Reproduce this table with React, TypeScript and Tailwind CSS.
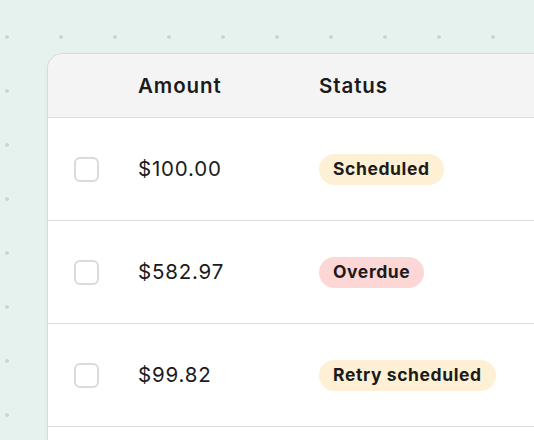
const rows = [
  { amount: '$100.00', status: 'Scheduled', tone: 'bg-[#fdf0d4]' },
  { amount: '$582.97', status: 'Overdue', tone: 'bg-[#fdd6d6]' },
  { amount: '$99.82', status: 'Retry scheduled', tone: 'bg-[#fdf0d4]' },
  { amount: '', status: '', tone: '' },
]

export default function App() {
  return (
    <div
      className="h-[440px] w-[534px] overflow-hidden bg-[#e5f2ee] bg-[radial-gradient(circle,#cbd7d3_1.8px,transparent_2.1px)] bg-[size:54px_54px] bg-[position:-20px_10px] pl-[47px] pt-[53px] text-[#1b1b1b]"
      style={{ fontFamily: 'Inter, "Noto Sans", sans-serif' }}
    >
      <div className="w-[520px] overflow-hidden rounded-tl-[16px] border-l border-t border-[#dadada] bg-white shadow-[0_1px_4px_rgba(0,0,0,0.04)]">
        <div className="grid h-[64px] grid-cols-[90px_181px_1fr] items-center border-b border-[#dcdcdc] bg-[#f4f4f4] pt-[2px] text-[20.5px] font-semibold tracking-[0.9px]">
          <div />
          <div>Amount</div>
          <div>Status</div>
        </div>
        {rows.map((r, i) => (
          <div
            key={i}
            className="grid h-[103px] grid-cols-[90px_181px_1fr] items-center border-b border-[#dcdcdc]"
          >
            <div className="pl-[26px]">
              {r.amount && <div className="h-[25px] w-[25px] rounded-[6px] border-2 border-[#dadada] bg-white" />}
            </div>
            <div className="text-[20.5px] tracking-[0.8px]">{r.amount}</div>
            <div>
              {r.status && (
                <span className={'inline-flex h-[31px] items-center rounded-full px-[14px] text-[17.5px] font-bold tracking-[0.6px] ' + r.tone}>
                  {r.status}
                </span>
              )}
            </div>
          </div>
        ))}
      </div>
    </div>
  )
}
